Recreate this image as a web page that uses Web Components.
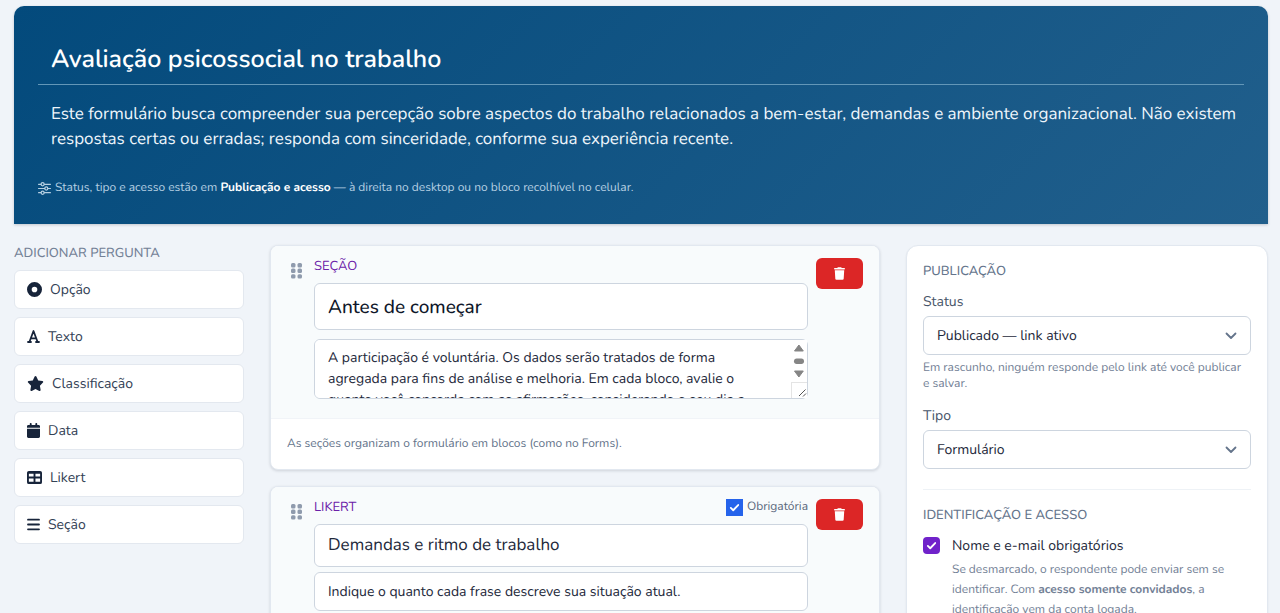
<!DOCTYPE html>
<html lang="pt-BR">
<head>
<meta charset="utf-8">
<meta name="viewport" content="width=device-width, initial-scale=1">
<title>Avaliação psicossocial no trabalho</title>
<style>
  html { scrollbar-width: none; }
  body {
    margin: 0;
    background: #f0f4f9;
    color: #1e293b;
    font-family: Nunito, Lato, "Open Sans", sans-serif;
    font-size: 14px;
    line-height: 21px;
    text-rendering: geometricPrecision;
  }
</style>
</head>
<body>
<form-editor>
  <form-hero slot="hero"
    heading="Avaliação psicossocial no trabalho"
    description="Este formulário busca compreender sua percepção sobre aspectos do trabalho relacionados a bem-estar, demandas e ambiente organizacional. Não existem respostas certas ou erradas; responda com sinceridade, conforme sua experiência recente.">Status, tipo e acesso estão em <strong>Publicação e acesso</strong> — à direita no desktop ou no bloco recolhível no celular.</form-hero>

  <tool-list slot="tools">
    <span slot="title">Adicionar pergunta</span>
    <tool-button icon="option">Opção</tool-button>
    <tool-button icon="font">Texto</tool-button>
    <tool-button icon="star">Classificação</tool-button>
    <tool-button icon="calendar">Data</tool-button>
    <tool-button icon="table">Likert</tool-button>
    <tool-button icon="bars">Seção</tool-button>
  </tool-list>

  <question-card>
    <span slot="kind">Seção</span>
    <text-field size="large" label="Título da seção" value="Antes de começar"></text-field>
    <text-block label="Descrição da seção" value="A participação é voluntária. Os dados serão tratados de forma agregada para fins de análise e melhoria. Em cada bloco, avalie o quanto você concorda com as afirmações, considerando o seu dia a dia."></text-block>
    <span slot="note">As seções organizam o formulário em blocos (como no Forms).</span>
  </question-card>

  <question-card compact>
    <span slot="kind">Likert</span>
    <check-field slot="option" kind="small">Obrigatória</check-field>
    <text-field size="medium" label="Título da pergunta" value="Demandas e ritmo de trabalho"></text-field>
    <text-field label="Instrução" value="Indique o quanto cada frase descreve sua situação atual."></text-field>
  </question-card>

  <side-panel slot="panel">
    <panel-section>
      <span slot="title">Publicação</span>
      <select-field label="Status" value="Publicado — link ativo">Em rascunho, ninguém responde pelo link até você publicar e salvar.</select-field>
      <select-field label="Tipo" value="Formulário"></select-field>
    </panel-section>
    <panel-section ruled>
      <span slot="title">Identificação e acesso</span>
      <check-field kind="large">Nome e e-mail obrigatórios
        <p slot="help">Se desmarcado, o respondente pode enviar sem se identificar. Com <strong>acesso somente convidados</strong>, a identificação vem da conta logada.</p>
      </check-field>
    </panel-section>
  </side-panel>
</form-editor>

<script>
const define = (name, render) => customElements.define(name, class extends HTMLElement {
  connectedCallback() {
    if (this.shadowRoot) return;
    const template = document.createElement('template');
    template.innerHTML = '<style>*{box-sizing:border-box}input,textarea,select,button{font:inherit;color:inherit;margin:0;text-rendering:inherit}</style>' + render(this);
    this.attachShadow({ mode: 'open' }).append(template.content.cloneNode(true));
  }
});

const icons = {
  option: [15, 15, '0 0 512 512', '<path fill-rule="evenodd" d="M256 0a256 256 0 1 1 0 512a256 256 0 1 1 0-512zM256 160a96 96 0 1 0 0 192a96 96 0 1 0 0-192z"/>'],
  font: [13, 15, '0 0 13 15', '<path fill="none" stroke="currentColor" stroke-width="1.800" stroke-linecap="round" stroke-linejoin="round" d="M2.400 13 6.500 2 10.600 13M3.800 9.400h5.400M1 13h3M9 13h3"/>'],
  star: [17, 15, '0 0 576 512', '<path d="M316.9 18C311.6 7 300.4 0 288.1 0s-23.4 7-28.8 18L195 150.3 51.4 171.5c-12 1.8-22 10.2-25.7 21.7s-.7 24.2 7.9 32.7L137.8 329 113.2 474.7c-2 12 3 24.2 12.9 31.3s23 8 33.8 2.3l128.3-68.5 128.3 68.5c10.8 5.7 23.9 4.9 33.8-2.3s14.9-19.3 12.9-31.3L438.5 329 542.7 225.9c8.6-8.5 11.7-21.2 7.9-32.7s-13.7-19.9-25.7-21.7L381.2 150.3 316.9 18z"/>'],
  calendar: [13, 15, '0 0 448 512', '<path d="M96 32V64H48C21.5 64 0 85.500 0 112v48H448V112c0-26.500-21.500-48-48-48H352V32c0-17.700-14.300-32-32-32s-32 14.300-32 32V64H160V32c0-17.700-14.300-32-32-32S96 14.300 96 32zM448 192H0V464c0 26.500 21.500 48 48 48H400c26.500 0 48-21.500 48-48V192z"/>'],
  table: [15, 15, '0 0 512 512', '<path fill-rule="evenodd" d="M64 32h384a64 64 0 0 1 64 64v320a64 64 0 0 1-64 64H64a64 64 0 0 1-64-64V96a64 64 0 0 1 64-64zM64 128v96h160v-96zM288 128v96h160v-96zM64 288v112h160v-112zM288 288v112h160v-112z"/>'],
  bars: [13, 15, '0 0 13 15', '<path fill="none" stroke="currentColor" stroke-width="1.800" stroke-linecap="round" d="M1 2.700h11M1 7.500h11M1 12.300h11"/>'],
  trash: [11, 13, '0 0 448 512', '<path d="M135.200 17.700 128 32H32a32 32 0 0 0 0 64h384a32 32 0 0 0 0-64h-96l-7.200-14.300A32 32 0 0 0 284 0H164a32 32 0 0 0-28.800 17.700zM416 128H32l21 339a48 48 0 0 0 48 45h246a48 48 0 0 0 48-45z"/>'],
  grip: [12, 16, '0 0 12 16', '<rect x="0" y="0" width="4.500" height="4.400" rx="1.500"/><rect x="6.500" y="0" width="4.500" height="4.400" rx="1.500"/><rect x="0" y="5.600" width="4.500" height="4.400" rx="1.500"/><rect x="6.500" y="5.600" width="4.500" height="4.400" rx="1.500"/><rect x="0" y="11.200" width="4.500" height="4.400" rx="1.500"/><rect x="6.500" y="11.200" width="4.500" height="4.400" rx="1.500"/>'],
  sliders: [13, 13, '0 0 16 16', '<g fill="none" stroke="currentColor" stroke-width="1.500" stroke-linecap="round"><path d="M.7 2.800h3M7.800 2.800h7.500M.7 8h7.500M12.300 8h3M.7 13.200h3M7.800 13.200h7.500"/><circle cx="5.700" cy="2.800" r="1.900"/><circle cx="10.200" cy="8" r="1.900"/><circle cx="5.700" cy="13.200" r="1.900"/></g>'],
  chevron: [12, 12, '0 0 12 12', '<path fill="none" stroke="currentColor" stroke-width="1.800" stroke-linecap="round" stroke-linejoin="round" d="M1.500 3.500 6 8 10.500 3.500"/>'],
  scroller: [16, 58, '0 0 16 58', '<path fill="#fff" d="M0 0h16v58H0z"/><path fill="#858585" stroke="#858585" stroke-linejoin="round" d="M3.500 11 7.900 5l4.400 6zM3.500 31 7.900 37l4.400-6z"/><rect x="3" y="18.500" width="10" height="5.500" rx="2.700" fill="#858585"/><path fill="none" stroke="#e4e4e4" d="M0 42.500h16M.5 42.500V58"/><path stroke="#555" d="M8 56 14.500 49.500M12 56.500l3-3"/>']
};

define('ui-icon', el => {
  const [w, h, box, body] = icons[el.getAttribute('name')];
  return `<style>:host{display:inline-flex;flex:none}svg{display:block}</style>
    <svg width="${w}" height="${h}" viewBox="${box}" fill="currentColor" aria-hidden="true">${body}</svg>`;
});

define('form-editor', () => `<style>
  :host { display: block; padding: 6px 12px 24px 14px; }
  .columns { display: grid; grid-template-columns: 230px minmax(0, 1fr) 362px; gap: 26px; align-items: start; margin-top: 21px; }
  main { display: grid; gap: 16px; }
  </style>
  <slot name="hero"></slot>
  <div class="columns">
    <slot name="tools"></slot>
    <main><slot></slot></main>
    <slot name="panel"></slot>
  </div>`);

define('form-hero', el => `<style>
  :host { display: block; padding: 28px 24px 26px; border-radius: 10px 10px 0 0; color: #fff;
    background: linear-gradient(135deg, #034a7c, #215f8c); box-shadow: 0 1px 3px #0f172a33; }
  input, textarea { display: block; width: 100%; background: none; border: 0; padding: 0 13px; outline: 0; }
  input { height: 51px; border-bottom: 1px solid #6397b8; font-size: 25px; font-weight: 600; }
  textarea { margin-top: 17px; padding-right: 4px; height: 56px; line-height: 25px; font-size: 17px; color: #eef5fb; resize: none; overflow: hidden; }
  p { display: flex; align-items: center; gap: 4px; margin: 20px 0 0; font-size: 12px; line-height: 20px; color: #b5cfe2; }
  ::slotted(strong) { color: #fff; }
  </style>
  <input aria-label="Título do formulário" value="${el.getAttribute('heading')}">
  <textarea aria-label="Descrição do formulário">${el.getAttribute('description')}</textarea>
  <p><ui-icon name="sliders"></ui-icon><span><slot></slot></span></p>`);

define('tool-list', () => `<style>
  :host { display: grid; gap: 8px; }
  h2 { margin: 0; font-size: 13px; font-weight: 500; line-height: 17px; color: #738196; text-transform: uppercase; }
  </style>
  <h2><slot name="title"></slot></h2><slot></slot>`);

define('tool-button', el => `<style>
  :host { display: block; }
  button { display: flex; align-items: center; gap: 8px; width: 100%; height: 39px; padding: 0 12px; background: #fff;
    border: 1px solid #e3e8ef; border-radius: 6px; color: #334155; }
  ui-icon { color: #17243a; }
  </style>
  <button type="button"><ui-icon name="${el.getAttribute('icon')}"></ui-icon><span><slot></slot></span></button>`);

define('question-card', el => `<style>
  :host { display: block; background: #fff; border: 1px solid #e2e8f0; border-radius: 8px; overflow: hidden; box-shadow: 0 1px 3px #0f172a26; }
  header { display: grid; grid-template-columns: 12px minmax(0, 1fr) 47px; column-gap: 8px; align-items: start; padding: 12px 16px 19px 20px; background: #f8fbfc; }
  .grip { margin-top: 5px; color: #8f9bad; }
  .body { display: grid; gap: ${el.hasAttribute('compact') ? 5 : 9}px; padding-left: 3px; }
  .top { display: flex; justify-content: space-between; align-items: center; height: 17px; font-size: 13px; line-height: 17px;
    margin-bottom: ${el.hasAttribute('compact') ? 3 : -1}px; }
  .kind { color: #6b21a8; text-transform: uppercase; }
  button { display: flex; align-items: center; justify-content: center; height: 31px; border: 0; border-radius: 6px; background: #dc2626; color: #fff; }
  footer { padding: 15px 16px; border-top: 1px solid #f1f4f8; font-size: 12px; line-height: 20px; color: #64748b; }
  </style>
  <header>
    <ui-icon class="grip" name="grip"></ui-icon>
    <div class="body">
      <div class="top"><span class="kind"><slot name="kind"></slot></span><slot name="option"></slot></div>
      <slot></slot>
    </div>
    <button type="button" aria-label="Excluir"><ui-icon name="trash"></ui-icon></button>
  </header>
  <footer><slot name="note"></slot></footer>`);

define('text-field', el => `<style>
  :host { display: block; }
  input { display: block; width: 100%; height: 39px; padding: 0 13px; background: #fff; border: 1px solid #cdd5df; border-radius: 6px; color: #1e293b; }
  .medium { height: 43px; font-size: 17px; }
  .large { height: 47px; font-size: 19px; font-weight: 500; color: #0f172a; }
  </style>
  <input class="${el.getAttribute('size') || ''}" aria-label="${el.getAttribute('label')}" value="${el.getAttribute('value')}">`);

define('text-block', el => `<style>
  :host { display: grid; }
  textarea, ui-icon { grid-area: 1 / 1; }
  textarea { display: block; width: 100%; height: 60px; padding: 7px 40px 7px 13px; line-height: 21px; background: #fff; border: 1px solid #cdd5df; border-radius: 6px; overflow: auto; resize: none; }
  ui-icon { place-self: center end; margin-right: 1px; pointer-events: none; }
  </style>
  <textarea aria-label="${el.getAttribute('label')}">${el.getAttribute('value')}</textarea><ui-icon name="scroller"></ui-icon>`);

define('side-panel', () => `<style>
  :host { display: block; padding: 17px 16px 16px; background: #fff; border: 1px solid #e2e8f0; border-radius: 12px; box-shadow: 0 1px 2px #0f172a14; }
  </style><slot></slot>`);

define('panel-section', el => `<style>
  :host { display: block; }
  :host([ruled]) { margin-top: 20px; padding-top: 17px; border-top: 1px solid #eef2f6; }
  h2 { margin: 0 0 11px; font-size: 13px; font-weight: 500; line-height: 17px; color: #64748b; text-transform: uppercase; }
  .fields { display: grid; gap: 13px; }
  </style>
  <h2><slot name="title"></slot></h2><div class="fields"><slot></slot></div>`);

define('select-field', el => `<style>
  :host { display: block; }
  label { display: block; margin-bottom: 4px; color: #475569; }
  .box { display: grid; align-items: center; }
  .box > * { grid-area: 1 / 1; }
  select { appearance: none; width: 100%; height: 39px; padding: 0 36px 0 13px; background: #fff; border: 1px solid #cdd5df; border-radius: 6px; color: #1e293b; }
  ui-icon { justify-self: end; margin-right: 14px; color: #64748b; pointer-events: none; }
  p { margin: 5px 0 0; padding-right: 8px; font-size: 12px; line-height: 16px; color: #738196; }
  </style>
  <label for="field">${el.getAttribute('label')}</label>
  <div class="box"><select id="field"><option>${el.getAttribute('value')}</option></select><ui-icon name="chevron"></ui-icon></div>
  ${el.textContent.trim() ? '<p><slot></slot></p>' : ''}`);

define('check-field', el => `<style>
  :host { display: block; }
  .row { display: grid; grid-template-columns: auto auto; justify-content: start; align-items: center; column-gap: 12px; }
  :host([kind=small]) .row { column-gap: 4px; font-size: 12px; color: #5b697c; }
  input { appearance: none; width: 17px; height: 17px; background: #7022ca center / 11px no-repeat; border-radius: 4px;
    background-image: url("data:image/svg+xml,%3Csvg xmlns='http://www.w3.org/2000/svg' viewBox='0 0 12 12'%3E%3Cpath fill='none' stroke='white' stroke-width='2' stroke-linecap='round' stroke-linejoin='round' d='M2 6.500 4.600 9 10 3.300'/%3E%3C/svg%3E"); }
  :host([kind=small]) input { background-color: #2563eb; border-radius: 0; }
  .help { grid-column: 2; margin-top: 4px; padding-right: 8px; font-size: 12px; line-height: 20px; color: #738196; }
  ::slotted(p) { margin: 0; }
  </style>
  <div class="row">
    <input type="checkbox" id="box" checked><label for="box"><slot></slot></label>
    ${el.getAttribute('kind') === 'large' ? '<div class="help"><slot name="help"></slot></div>' : ''}
  </div>`);
</script>
</body>
</html>
